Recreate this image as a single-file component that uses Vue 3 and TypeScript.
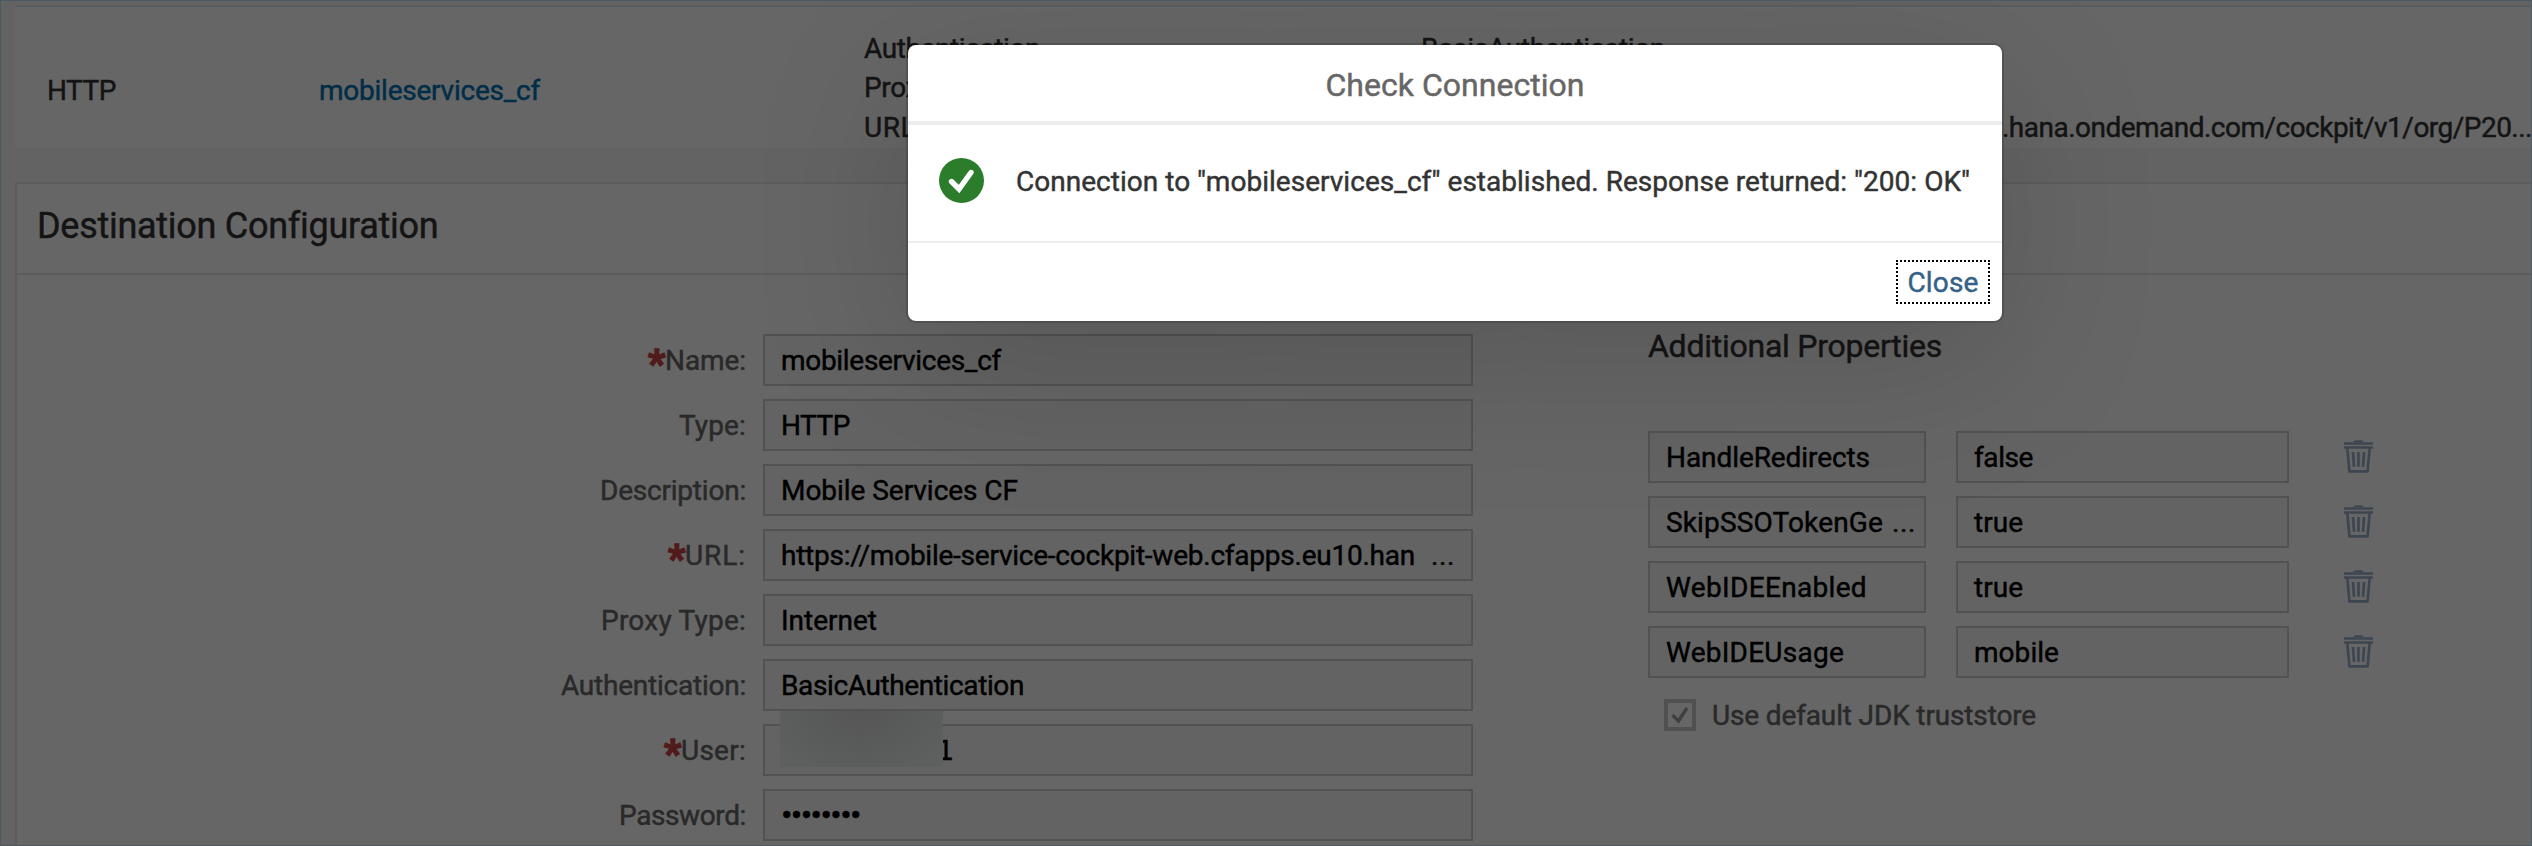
<script setup lang="ts">
import type { Directive } from 'vue'

interface Field {
  label: string
  labelWidth: number
  value: string
  width: number
  required?: boolean
  clipped?: boolean
  masked?: boolean
}

interface Property {
  key: string
  keyWidth: number
  value: string
  valueWidth: number
  clipped?: boolean
}

interface Run {
  text: string
  width: number
}

interface Detail {
  name: string
  nameWidth: number
  runs: Run[]
}

/* Tracks a run of text so that it fills the given width in pixels. */
const vFit: Directive<HTMLElement, number> = {
  mounted(el, { value }) {
    const count = (el.textContent ?? '').length
    const natural = el.getBoundingClientRect().width
    if (value && count) el.style.letterSpacing = `${((value - natural) / count).toFixed(3)}px`
  },
}

const details: Detail[] = [
  { name: 'Authentication', nameWidth: 176, runs: [{ text: 'BasicAuthentication', width: 244 }] },
  { name: 'Proxy Type', nameWidth: 132, runs: [{ text: 'Internet', width: 98 }] },
  {
    name: 'URL',
    nameWidth: 52,
    runs: [
      { text: 'https://mobile-service-cockpit-web.cfapps.eu10', width: 581 },
      { text: '.hana.ondemand.com/cockpit/v1/org/P20...', width: 530 },
    ],
  },
]

const fields: Field[] = [
  { label: 'Name:', labelWidth: 81, value: 'mobileservices_cf', width: 220, required: true },
  { label: 'Type:', labelWidth: 67, value: 'HTTP', width: 69 },
  { label: 'Description:', labelWidth: 146, value: 'Mobile Services CF', width: 237 },
  {
    label: 'URL:',
    labelWidth: 61,
    value: 'https://mobile-service-cockpit-web.cfapps.eu10.han',
    width: 634,
    required: true,
    clipped: true,
  },
  { label: 'Proxy Type:', labelWidth: 145, value: 'Internet', width: 96 },
  { label: 'Authentication:', labelWidth: 185, value: 'BasicAuthentication', width: 243 },
  { label: 'User:', labelWidth: 65, value: '1', width: 0, required: true, masked: true },
  { label: 'Password:', labelWidth: 127, value: '••••••••', width: 79 },
]

const properties: Property[] = [
  { key: 'HandleRedirects', keyWidth: 204, value: 'false', valueWidth: 59 },
  { key: 'SkipSSOTokenGe', keyWidth: 217, value: 'true', valueWidth: 49, clipped: true },
  { key: 'WebIDEEnabled', keyWidth: 201, value: 'true', valueWidth: 49 },
  { key: 'WebIDEUsage', keyWidth: 178, value: 'mobile', valueWidth: 85 },
]
</script>

<template>
  <div class="screen">
    <div class="page">
      <section class="row">
        <div class="cell"><span v-fit="69">HTTP</span></div>
        <div class="cell"><a v-fit="221" class="link">mobileservices_cf</a></div>
        <div class="lines">
          <div v-for="d in details" :key="d.name" class="line">
            <span v-fit="d.nameWidth">{{ d.name }}</span>
          </div>
        </div>
        <div class="lines">
          <div v-for="d in details" :key="d.name" class="line">
            <span v-for="r in d.runs" :key="r.text" v-fit="r.width">{{ r.text }}</span>
          </div>
        </div>
      </section>

      <section class="panel">
        <header class="panel-head"><h2 v-fit="400">Destination Configuration</h2></header>
        <div class="panel-body">
          <div class="form">
            <div v-for="f in fields" :key="f.label" class="field">
              <label class="label">
                <span v-if="f.required" class="star">*</span><span v-fit="f.labelWidth">{{ f.label }}</span>
              </label>
              <div class="input" :class="{ masked: f.masked, secret: f.label === 'Password:' }">
                <span v-fit="f.width">{{ f.value }}</span>
                <span v-if="f.clipped" class="more">...</span>
              </div>
            </div>
          </div>

          <div class="extra">
            <h3><span v-fit="294">Additional Properties</span></h3>
            <div v-for="p in properties" :key="p.key" class="property">
              <div class="input key">
                <span v-fit="p.keyWidth">{{ p.key }}</span>
                <span v-if="p.clipped" class="more">...</span>
              </div>
              <div class="input">
                <span v-fit="p.valueWidth">{{ p.value }}</span>
              </div>
              <svg class="trash" viewBox="0 0 29 33" width="29" height="33">
                <path d="M9 2.2 Q10 .2 12 .2 H17 Q19 .2 20 2.2 Z" fill="currentColor" />
                <path d="M0 3.4 H29 M0 7.5 H29" stroke="currentColor" stroke-width="2.5" fill="none" />
                <path
                  d="M3.3 8 L5.4 31.4 H23.6 L25.7 8 M9 12 L10 26.8 M14.5 12 V26.8 M20 12 L19 26.8"
                  stroke="currentColor"
                  stroke-width="2.7"
                  stroke-linejoin="round"
                  fill="none"
                />
              </svg>
            </div>
            <div class="check">
              <span class="box">
                <svg viewBox="0 0 24 24" width="24" height="24">
                  <path d="M4.5 12 L10.5 18 L19 5" stroke="currentColor" stroke-width="3.4" fill="none" />
                </svg>
              </span>
              <span v-fit="324">Use default JDK truststore</span>
            </div>
          </div>
        </div>
      </section>
    </div>

    <div class="shade"></div>
    <div class="redaction"></div>

    <div class="dialog" role="dialog">
      <header class="dialog-head"><span v-fit="259">Check Connection</span></header>
      <div class="dialog-body">
        <svg class="ok" viewBox="0 0 45 45" width="45" height="45">
          <circle cx="22.5" cy="22.5" r="22.5" fill="#2b7d2b" />
          <path
            d="M12.5 23.5 L20 31 L32 14.5"
            stroke="#fff"
            stroke-width="5.4"
            stroke-linecap="round"
            stroke-linejoin="miter"
            fill="none"
          />
        </svg>
        <span v-fit="954">Connection to "mobileservices_cf" established. Response returned: "200: OK"</span>
      </div>
      <footer class="dialog-foot">
        <button class="close" type="button"><span v-fit="71">Close</span></button>
      </footer>
    </div>
    <div class="frame"></div>
  </div>
</template>

<style>
body {
  margin: 0;
  overflow: hidden;
}
</style>

<style scoped>
.screen {
  position: relative;
  width: 2532px;
  height: 846px;
  overflow: hidden;
  background: #f7f7f7;
  font-family: Roboto, 'Liberation Sans', sans-serif;
  font-size: 28px;
  color: #333;
  white-space: nowrap;
  -webkit-text-stroke: 0.45px currentColor;
}
.screen * {
  box-sizing: border-box;
}
.page {
  display: flex;
  flex-direction: column;
  gap: 34px;
  height: 100%;
  padding: 5px 0 0 15px;
}
.row {
  display: grid;
  grid-template-columns: 272px 545px 557px 1fr;
  flex: none;
  height: 143px;
  padding-left: 32px;
  border-top: 2px solid #e5e5e5;
  background: #fff;
}
.cell {
  padding-top: 64px;
  line-height: 40px;
}
.link {
  display: inline-block;
  color: #0070b1;
}
.lines {
  padding-top: 22px;
}
.line {
  height: 39.3px;
  line-height: 39.3px;
}
.panel {
  display: flex;
  flex-direction: column;
  flex: 1;
  border: 2px solid #e5e5e5;
  border-width: 2px 0 0 2px;
  background: #fff;
}
.panel-head {
  display: flex;
  align-items: center;
  height: 91px;
  padding: 0 0 5px 20px;
  border-bottom: 2px solid #e5e5e5;
}
h2,
h3 {
  margin: 0;
  font-weight: 400;
}
h2 {
  font-size: 36px;
}
.panel-body {
  display: flex;
  gap: 175px;
  padding: 59px 0 0 483px;
}
.form {
  display: flex;
  flex-direction: column;
  gap: 13px;
  width: 973px;
}
.field {
  display: flex;
  gap: 17px;
  align-items: center;
  height: 52px;
}
.label {
  display: flex;
  flex: 1;
  justify-content: flex-end;
  color: #666;
}
.star {
  width: 17px;
  height: 33px;
  font-size: 38px;
  font-weight: 700;
  line-height: 41px;
  color: #cc4444;
  -webkit-text-stroke: 1.6px currentColor;
}
.input {
  display: flex;
  align-items: center;
  justify-content: space-between;
  width: 710px;
  height: 52px;
  padding: 0 16px;
  border: 2px solid #cdcdcd;
  background: #f7f7f7;
  color: #000;
}
.masked {
  padding-left: 172px;
  font-family: 'DejaVu Sans', sans-serif;
  font-size: 27px;
}
.secret {
  font-size: 34px;
  line-height: 48px;
}
.more {
  letter-spacing: 0.6px;
}
.extra {
  display: flex;
  flex-direction: column;
  gap: 13px;
}
h3 {
  height: 84px;
  font-size: 32px;
  line-height: 25px;
}
.property {
  display: grid;
  grid-template-columns: 278px 333px 29px;
  gap: 30px;
}
.property .input {
  width: auto;
}
.property .input.key {
  padding-right: 8px;
}
.trash {
  margin: 9px 0 0 25px;
  color: #99afc8;
}
.check {
  display: flex;
  align-items: center;
  gap: 16px;
  height: 48px;
  padding-left: 16px;
  color: #666;
}
.box {
  display: flex;
  width: 32px;
  height: 32px;
  border: 4px solid #c8c8c8;
  color: #a0a0a0;
}
.shade {
  position: absolute;
  inset: 0;
  background: rgba(0, 0, 0, 0.6);
}
.redaction {
  position: absolute;
  left: 780px;
  top: 711px;
  width: 163px;
  height: 56px;
  background: radial-gradient(ellipse 100px 70px at 50% 0, #565656, #5a5b5b 60%, #5e6060);
}
.frame {
  position: absolute;
  inset: 0;
  border: 1px solid #4c5a63;
}
.dialog {
  position: absolute;
  left: 908px;
  top: 45px;
  display: flex;
  flex-direction: column;
  width: 1094px;
  height: 276px;
  border-radius: 8px;
  background: #fff;
  box-shadow:
    0 0 0 2px rgba(0, 0, 0, 0.15),
    0 40px 160px rgba(0, 0, 0, 0.15);
}
.dialog-head {
  display: flex;
  align-items: center;
  justify-content: center;
  height: 80px;
  padding-top: 3px;
  border-bottom: 4px solid #ededed;
  font-size: 32px;
  color: #666;
}
.dialog-body {
  display: flex;
  align-items: center;
  gap: 32px;
  height: 116px;
  padding: 0 0 3px 31px;
}
.ok {
  margin-bottom: 2px;
}
.dialog-foot {
  display: flex;
  align-items: center;
  justify-content: flex-end;
  height: 80px;
  padding: 0 12px 0 0;
  border-top: 2px solid #ededed;
}
.close {
  display: flex;
  align-items: center;
  justify-content: center;
  width: 94px;
  height: 44px;
  padding: 0;
  border: 2px dotted #000;
  background: none;
  font: inherit;
  color: #346187;
}
</style>
